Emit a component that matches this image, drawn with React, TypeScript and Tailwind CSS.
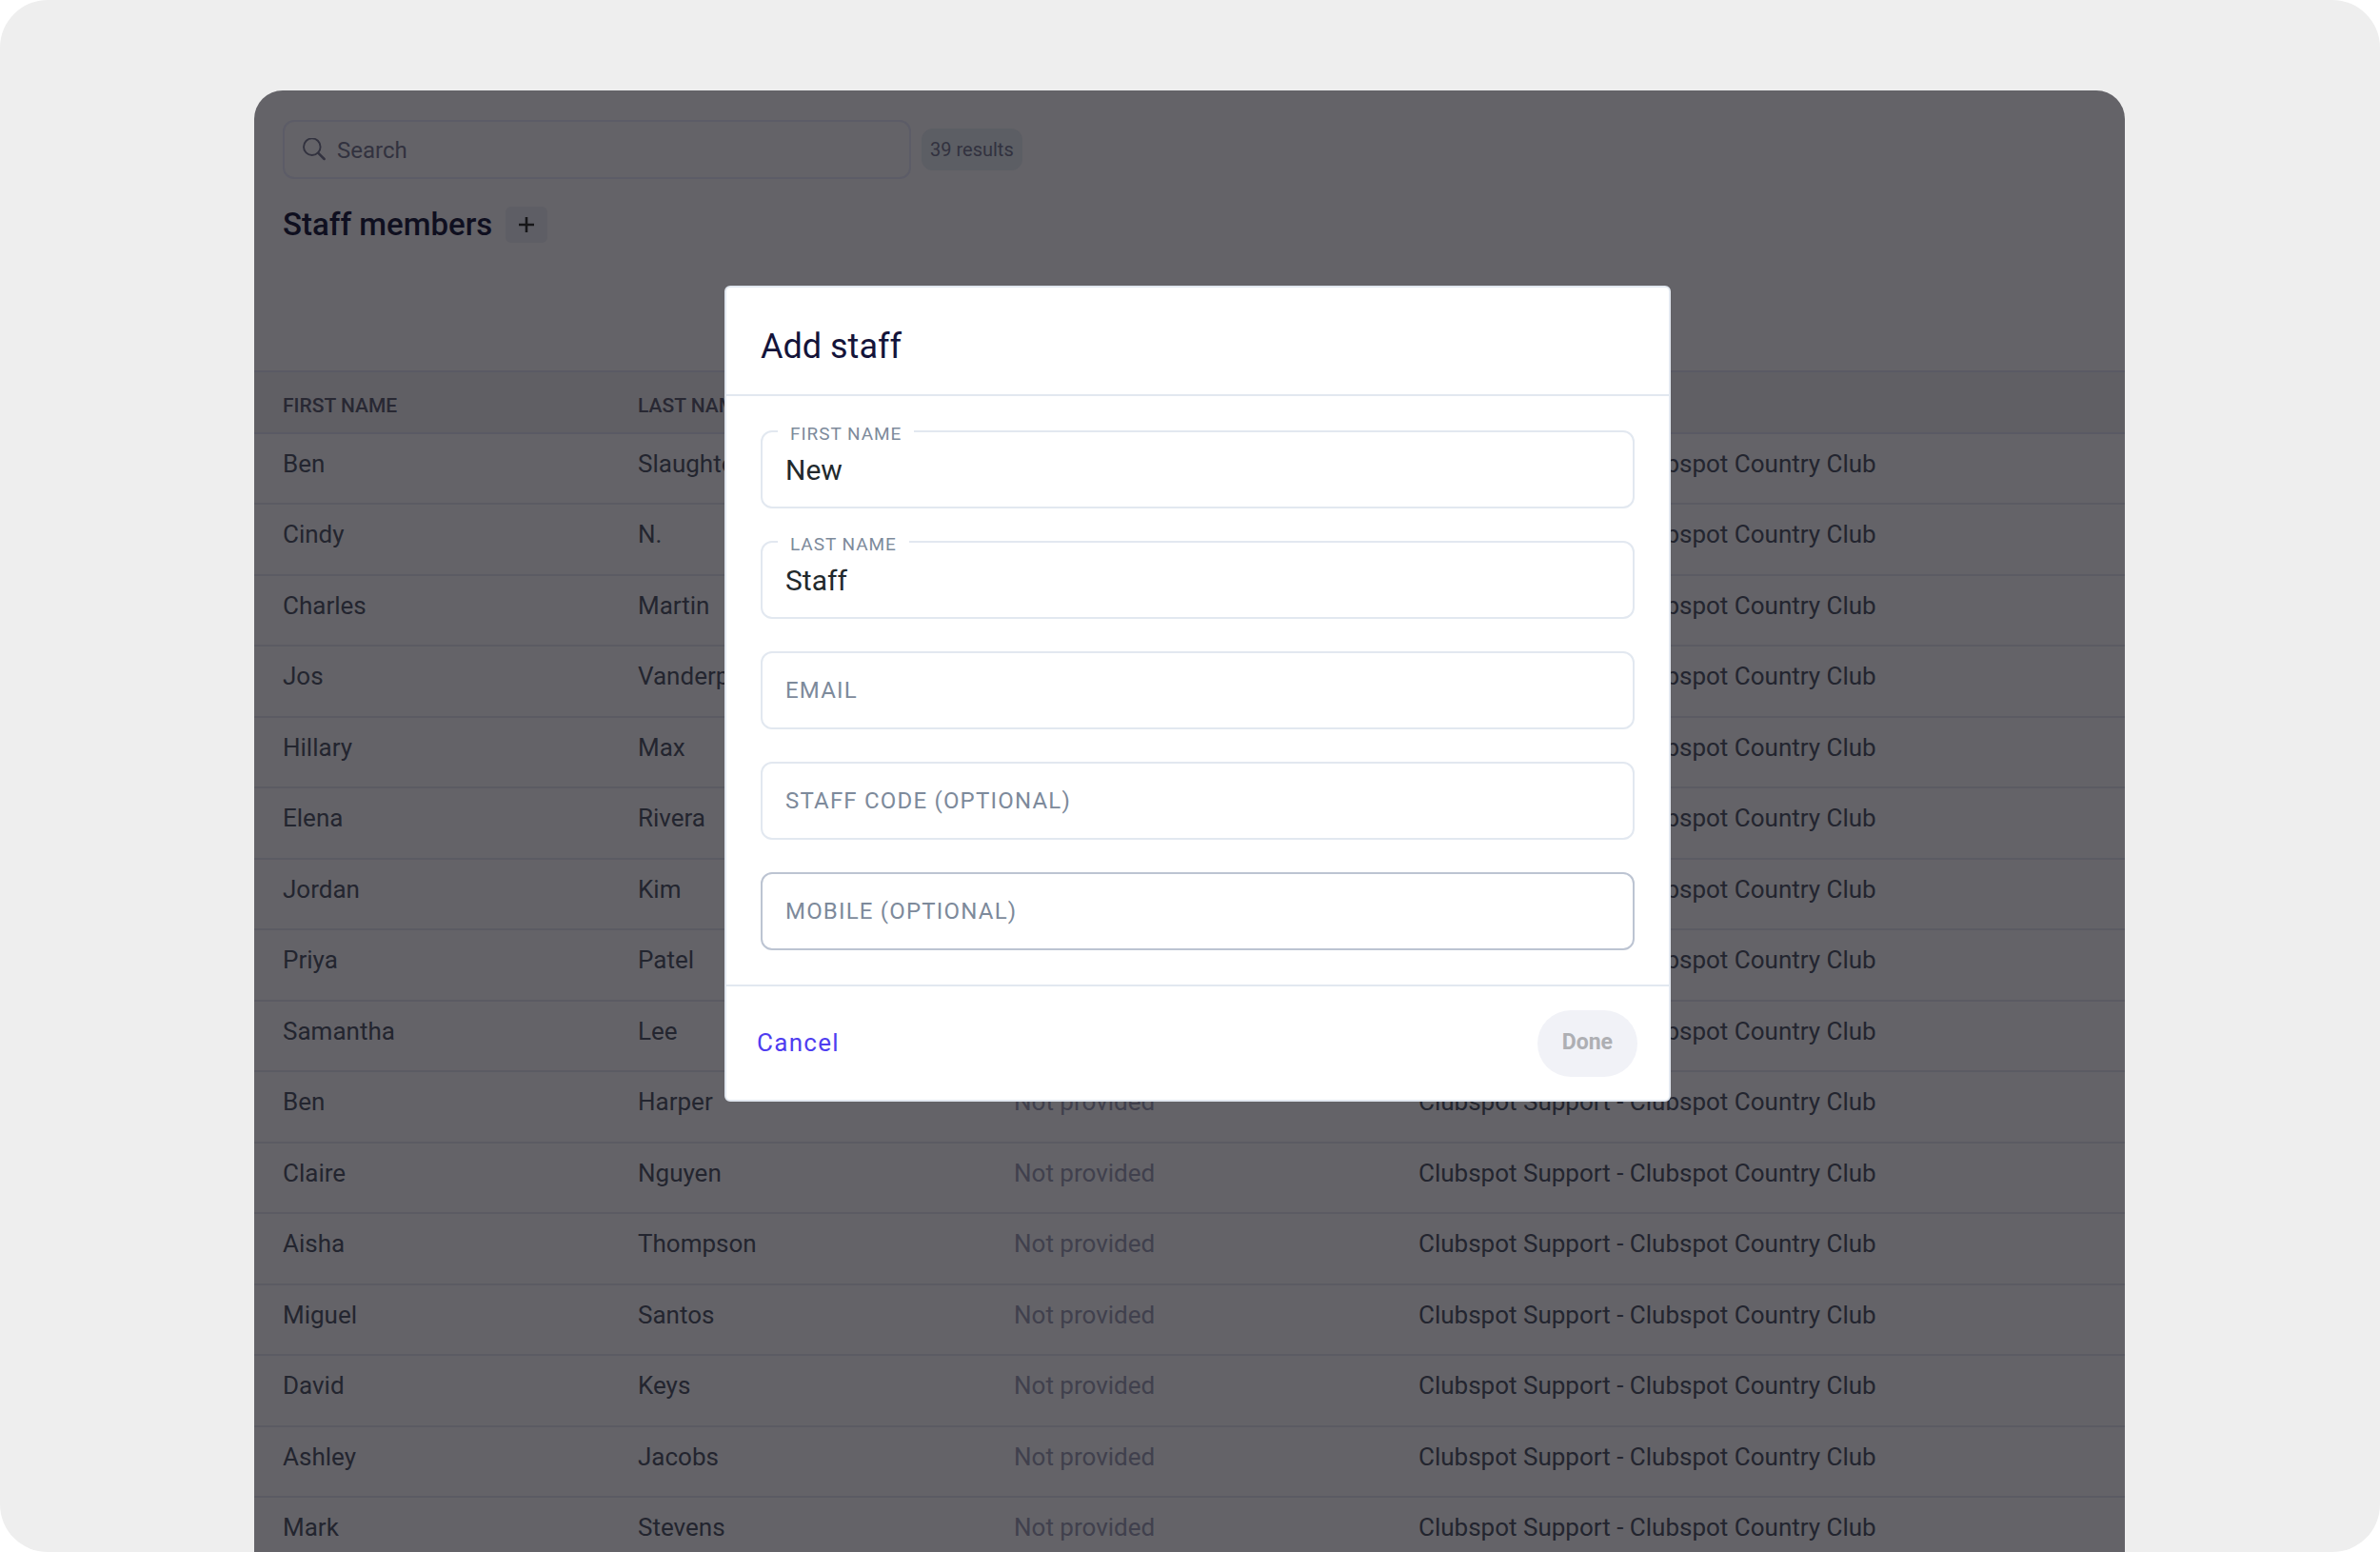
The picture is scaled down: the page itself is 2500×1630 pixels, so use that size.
const staff: [string, string][] = [
  ['Ben', 'Slaughter'],
  ['Cindy', 'N.'],
  ['Charles', 'Martin'],
  ['Jos', 'Vanderpool'],
  ['Hillary', 'Max'],
  ['Elena', 'Rivera'],
  ['Jordan', 'Kim'],
  ['Priya', 'Patel'],
  ['Samantha', 'Lee'],
  ['Ben', 'Harper'],
  ['Claire', 'Nguyen'],
  ['Aisha', 'Thompson'],
  ['Miguel', 'Santos'],
  ['David', 'Keys'],
  ['Ashley', 'Jacobs'],
  ['Mark', 'Stevens'],
];

function SearchIcon() {
  return (
    <svg width="24" height="24" viewBox="0 0 24 24" fill="none" stroke="currentColor" aria-hidden="true" className="shrink-0">
      <circle cx="9.8" cy="9.2" r="8.8" strokeWidth="1.9" />
      <path d="M16.2 15.6 22.6 22" strokeWidth="2.5" strokeLinecap="round" />
    </svg>
  );
}

function PlusIcon() {
  return (
    <svg width="16" height="16" viewBox="0 0 16 16" fill="none" stroke="currentColor" strokeWidth="2.6" aria-hidden="true">
      <path d="M8 0v16M0 8h16" />
    </svg>
  );
}

function StaffPage() {
  return (
    <div className="bg-[#646368]">
      <div className="flex items-center gap-[11px] px-[30px] pt-[31px]">
        <div className="flex h-[62px] w-[660px] items-center gap-3 rounded-xl border-2 border-[#5c5c67] px-[19px] text-[#32323f]">
          <SearchIcon />
          <input
            type="search"
            aria-label="Search"
            placeholder="Search"
            className="w-full bg-transparent pt-0.5 text-2xl outline-none placeholder:text-[#32323f]"
          />
        </div>
        <span className="flex h-11 items-center rounded-xl bg-[#5c5e64] px-[9px] text-xl text-[#32323f]">39 results</span>
      </div>
      <div className="flex h-[201px] items-start gap-[14px] px-[30px] pt-[29px]">
        <h1 className="text-[33px] leading-[38px] font-medium text-[#0f0f1f]">Staff members</h1>
        <button
          type="button"
          aria-label="Add staff member"
          className="flex h-[38px] w-11 items-center justify-center rounded-md bg-[#5e5e65] text-[#161618]"
        >
          <PlusIcon />
        </button>
      </div>
      <table className="w-full table-fixed border-collapse text-left">
        <colgroup>
          <col className="w-[403px]" />
          <col className="w-[395px]" />
          <col className="w-[425px]" />
          <col />
        </colgroup>
        <thead className="bg-[#605f64]">
          <tr className="h-[65px] border-y-2 border-[#5a5a64] text-[21px] text-[#282833]">
            <th scope="col" className="pt-2 pl-[30px] font-medium">FIRST NAME</th>
            <th scope="col" className="pt-2 font-medium">LAST NAME</th>
            <th scope="col" />
            <th scope="col" />
          </tr>
        </thead>
        <tbody>
          {staff.map(([first, last], i) => (
            <tr key={i} className="border-b-2 border-[#5b5b63] text-[26px] leading-[30px] text-[#23252f] odd:h-[74px] even:h-[75px]">
              <td className="pb-[11px] pl-[30px]">{first}</td>
              <td className="pb-[11px]">{last}</td>
              <td className="pb-[11px] text-[#40404d]">Not provided</td>
              <td className="pb-[11px]">Clubspot Support - Clubspot Country Club</td>
            </tr>
          ))}
        </tbody>
      </table>
    </div>
  );
}

type FieldProps = { id: string; label: string; value?: string; active?: boolean };

function Field({ id, label, value, active }: FieldProps) {
  return (
    <div className="relative">
      <input
        id={id}
        type="text"
        defaultValue={value}
        className={
          active
            ? 'block h-[82px] w-full rounded-xl border-2 border-[#bcc4d2] px-6 text-3xl text-[#22292c] outline-none'
            : 'block h-[82px] w-full rounded-xl border-2 border-[#e2e8f0] px-6 text-3xl text-[#22292c] outline-none'
        }
      />
      <label
        htmlFor={id}
        className={
          value
            ? 'absolute -top-2 left-[18px] bg-white px-[13px] text-[19px] leading-6 tracking-wider text-[#7d8a9b]'
            : 'absolute inset-y-0 left-[26px] flex items-center text-2xl tracking-wider text-[#7d8a9b]'
        }
      >
        {label}
      </label>
    </div>
  );
}

function AddStaffDialog() {
  return (
    <form
      role="dialog"
      aria-modal="true"
      aria-labelledby="dialog-title"
      className="w-[994px] rounded-md border-2 border-[#e2e8f0] bg-white"
    >
      <div className="border-b-2 border-[#e2e8f0] px-9 pt-[42px] pb-[30px]">
        <h2 id="dialog-title" className="text-4xl leading-10 text-[#14143a]">Add staff</h2>
      </div>
      <div className="flex flex-col gap-[34px] px-9 py-9">
        <Field id="first-name" label="FIRST NAME" value="New" />
        <Field id="last-name" label="LAST NAME" value="Staff" />
        <Field id="email" label="EMAIL" />
        <Field id="staff-code" label="STAFF CODE (OPTIONAL)" />
        <Field id="mobile" label="MOBILE (OPTIONAL)" active />
      </div>
      <div className="flex h-[121px] items-center justify-between border-t-2 border-[#e2e8f0] pr-[33px] pl-8">
        <button type="button" className="text-[26px] tracking-wider text-[#4f3df0]">Cancel</button>
        <button type="submit" disabled className="h-[70px] rounded-full bg-[#f1f2f7] px-[26px] text-[23px] font-bold text-[#aeafb3]">
          Done
        </button>
      </div>
    </form>
  );
}

export default function App() {
  return (
    <div className="h-screen bg-white font-['Roboto',sans-serif]">
      <main className="h-full overflow-hidden rounded-[50px] bg-[#eeeeee] pt-[95px] pr-[268px] pl-[267px]">
        <div className="relative overflow-hidden rounded-t-[30px]">
          <StaffPage />
          <div className="absolute inset-x-0 top-[205px] flex justify-center pl-[17px]">
            <AddStaffDialog />
          </div>
        </div>
      </main>
    </div>
  );
}
